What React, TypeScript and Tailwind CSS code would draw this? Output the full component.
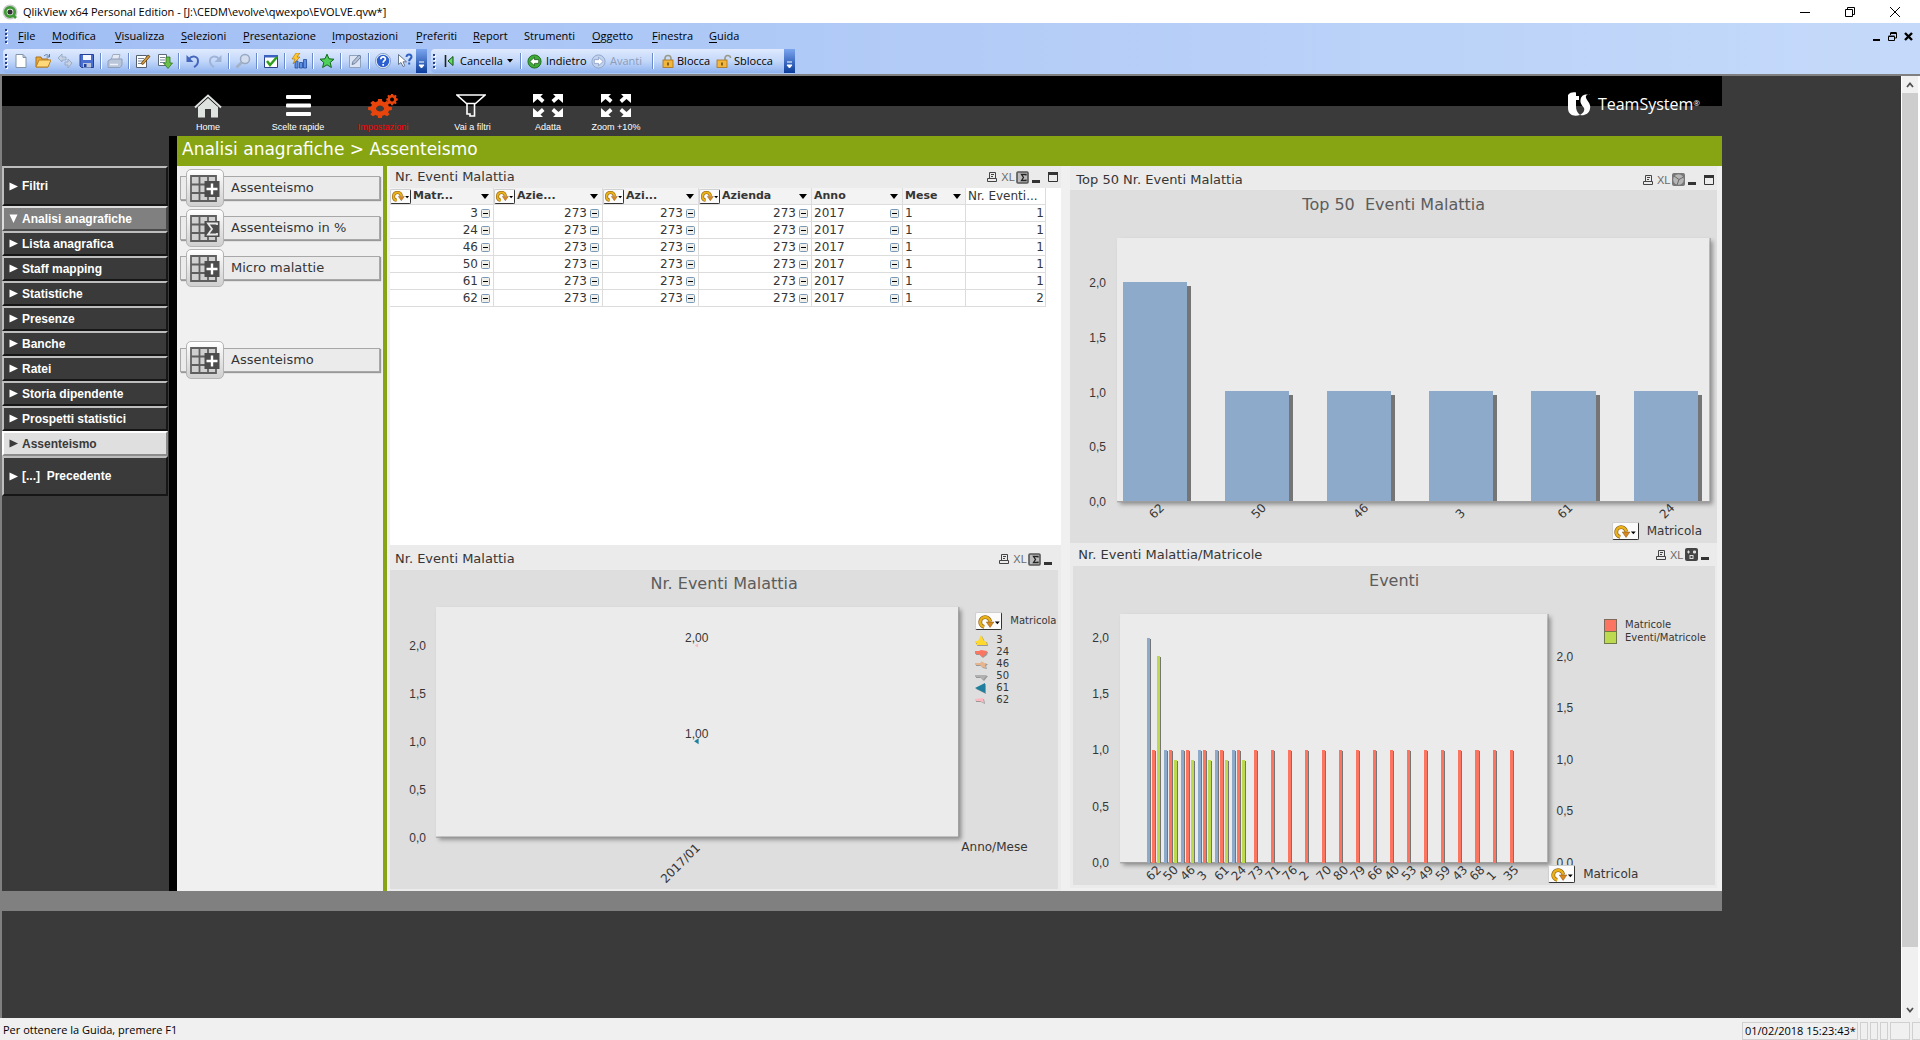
import React from 'react';

const TOOL = 'flex h-[22px] w-[22px] shrink-0 items-center justify-center';

// ---------- small glyphs ----------

function CycleButton({ small = false }: { small?: boolean }) {
  return (
    <button
      type="button"
      aria-label="Cambia dimensione"
      className={`flex shrink-0 items-center justify-center rounded-[2px] border border-t-[#d0d0d0] border-l-[#d0d0d0] border-r-[#333] border-b-[#333] bg-[#fbfbfb] ${
        small ? 'h-[15px] w-[21px]' : 'h-[18px] w-[27px]'
      }`}
    >
      <svg viewBox="0 0 22 14" className={small ? 'h-[12px] w-[19px]' : 'h-[15px] w-[24px]'}>
        <path d="M6.500 12A4.600 4.600 0 1 1 12 7" fill="none" stroke="#8a5a10" strokeWidth="3.600" />
        <path d="M6.500 12A4.600 4.600 0 1 1 12 7" fill="none" stroke="#e9b21c" strokeWidth="2.400" />
        <path d="M8.500 7.500h7L12 12.500z" fill="#d98a1c" stroke="#8a4f10" strokeWidth=".5" />
        <path d="M16.500 7h4.500l-2.200 2.600z" fill="#000" />
      </svg>
    </button>
  );
}

function Minus() {
  return (
    <svg viewBox="0 0 9 9" className="h-[9px] w-[9px] shrink-0">
      <rect x=".5" y=".5" width="8" height="8" rx="1" fill="#f1efe9" stroke="#7898b5" />
      <path d="M2 4.5h5" stroke="#000" />
    </svg>
  );
}

function Grip() {
  return (
    <svg viewBox="0 0 3 16" className="mr-[2px] ml-[2px] h-4 w-[3px] shrink-0">
      {[1, 5, 9, 13].map(y => (
        <g key={y}>
          <rect x="1" y={y + 1} width="2" height="2" fill="#fff" />
          <rect x="0" y={y} width="2" height="2" fill="#27418a" />
        </g>
      ))}
    </svg>
  );
}

function Sep() {
  return (
    <span className="flex w-[6px] shrink-0 justify-center">
      <span className="h-4 w-[2px] border-l border-[#6a8ccb] bg-white" />
    </span>
  );
}

function Cap() {
  return (
    <button
      type="button"
      aria-label="Opzioni barra"
      className="flex h-[24px] w-[11px] shrink-0 items-end justify-center bg-linear-to-b from-[#7ba5ee] to-[#0b3c9c] pb-1"
    >
      <svg viewBox="0 0 7 8" className="h-2 w-[7px]">
        <path d="M1 1h5M1 4h5L3.5 7z" stroke="#fff" fill="#fff" strokeWidth="1" />
      </svg>
    </button>
  );
}

// ---------- toolbar ----------

const toolIcons: Record<string, React.ReactNode> = {
  nuovo: <path d="M3 1.5h7l3 3v10H3zM10 1.5v3h3" fill="#fff" stroke="#8494a8" />,
  apri: (
    <>
      <path d="M1 14V4h5l1 2h6v8z" fill="#e9a83a" stroke="#a8701c" />
      <path d="M1 14l3-7h12l-3 7z" fill="#ffd979" stroke="#b9822a" />
      <path d="M9 3c2-2 4-1.500 5 .5M14.500 1v3h-3" fill="none" stroke="#55789f" />
    </>
  ),
  ricarica: (
    <path d="M1 5l4-4v3h4v3H5v2zM15 10l-4 5v-3H8V9h3V6z" fill="#c6d2e4" stroke="#8fa2bd" strokeWidth=".8" />
  ),
  salva: (
    <>
      <path d="M1 1.500h13.500v13H2.500L1 13z" fill="#4a6fd0" stroke="#24409a" />
      <path d="M4 2h8v5H4z" fill="#f4f7ff" />
      <path d="M4 10h8v4.500H4z" fill="#b8c4da" />
      <path d="M5 11h2.500v3H5z" fill="#24409a" />
    </>
  ),
  stampa: (
    <>
      <path d="M4 7l2-5.500h7L11.500 7z" fill="#e6ebf3" stroke="#9eabc0" />
      <path d="M1 8l3-2h11v6l-2 2.500H1z" fill="#b9c5d8" stroke="#8f9fb9" />
      <path d="M3 11.500h8" stroke="#eef2f8" strokeWidth="1.500" />
    </>
  ),
  modifica: (
    <>
      <path d="M1.500 2.500h10v12h-10z" fill="#fff" stroke="#55606e" />
      <path d="M3 5.500h6M3 8h5M3 10.500h6" stroke="#7a8694" />
      <path d="M6 10.500L13 2l2 1.500-7 8z" fill="#d69a3a" stroke="#5a3d10" strokeWidth=".8" />
    </>
  ),
  esegui: (
    <>
      <path d="M1.500 1.500h8v11h-8z" fill="#fff" stroke="#5d6a7a" />
      <path d="M3 4.500h5M3 7h5M3 9.500h5" stroke="#7a8694" />
      <path d="M9 4h4v6h2.500L11 15.500 6.500 10H9z" fill="#6cbf4a" stroke="#2f7a1c" strokeWidth=".8" />
    </>
  ),
  annulla: (
    <>
      <path d="M4 6c3-4 9-3 9 2 0 3-2 5-4 6" fill="none" stroke="#4566bd" strokeWidth="2" />
      <path d="M1.500 2v7h7z" fill="#4566bd" />
    </>
  ),
  ripristina: (
    <>
      <path d="M12 6C9 2 3 3 3 8c0 3 2 5 4 6" fill="none" stroke="#9fb3d6" strokeWidth="2" />
      <path d="M14.500 2v7h-7z" fill="#9fb3d6" />
    </>
  ),
  cerca: (
    <>
      <circle cx="10" cy="6" r="4.500" fill="#d3dded" stroke="#98a8c2" strokeWidth="1.500" />
      <path d="M6.500 9.500L1.500 14.500" stroke="#a4b0c4" strokeWidth="2.500" />
    </>
  ),
  selezioni: (
    <>
      <path d="M1.500 2.500h13v12h-13z" fill="#fff" stroke="#27418a" />
      <path d="M1 2h14v2.500H1z" fill="#3b62c0" />
      <path d="M4 8l3 4 7-8" fill="none" stroke="#2fa01c" strokeWidth="2.500" />
    </>
  ),
  grafico: (
    <>
      <path d="M4 8h3v7H4zM8.500 9.500h3V15h-3zM12.500 6.500h3V15h-3z" fill="#5f8fe0" stroke="#1f4aa0" strokeWidth=".8" />
      <path d="M5 0L1 6h3l-2 5 7-7H6l3-4z" fill="#ffc62e" stroke="#a87208" strokeWidth=".6" />
    </>
  ),
  preferito: (
    <path
      d="M8 1.200l2 4.600 5 .4-3.800 3.300 1.200 5L8 11.800l-4.400 2.700 1.200-5L1 6.200l5-.4z"
      fill="#4fd05a"
      stroke="#14671e"
    />
  ),
  note: (
    <>
      <path d="M2.500 2.500h11v12h-11z" fill="#dbe4f2" stroke="#8fa2bd" />
      <path d="M5 11.500l1-3L12 2l2 2-6 6.500z" fill="#b4c2d8" stroke="#71839f" />
    </>
  ),
  guida: (
    <>
      <circle cx="8" cy="8" r="7" fill="#2c5fd0" stroke="#e6edf9" strokeWidth="1.500" />
      <circle cx="8" cy="8" r="7.600" fill="none" stroke="#5877ae" strokeWidth=".6" />
      <path d="M5.800 6.200C6 3 10.800 3.400 10.300 6.300 10 7.800 8.200 7.800 8.200 9.800M8.200 11v1.800" fill="none" stroke="#fff" strokeWidth="1.700" />
    </>
  ),
  contesto: (
    <>
      <path d="M1.500 1.500v10l2.500-2 2 4 1.800-.8L6 8.800h3.500z" fill="#fff" stroke="#5a6a80" strokeWidth=".9" />
      <path d="M9.500 4C9.500.500 15 .8 14.500 4c-.3 1.800-2.300 2-2.300 4.200M12.200 9.500v2" fill="none" stroke="#2c5fc0" strokeWidth="2" />
    </>
  ),
};

const toolGroups = [
  ['nuovo', 'apri', 'ricarica', 'salva'],
  ['stampa'],
  ['modifica', 'esegui'],
  ['annulla', 'ripristina'],
  ['cerca'],
  ['selezioni'],
  ['grafico'],
  ['preferito'],
  ['note'],
  ['guida', 'contesto'],
];

const menus = [
  { label: 'File', w: 'w-[34px]' },
  { label: 'Modifica', w: 'w-[63px]' },
  { label: 'Visualizza', w: 'w-[66px]' },
  { label: 'Selezioni', w: 'w-[62px]' },
  { label: 'Presentazione', w: 'w-[89px]' },
  { label: 'Impostazioni', w: 'w-[84px]' },
  { label: 'Preferiti', w: 'w-[57px]' },
  { label: 'Report', w: 'w-[51px]' },
  { label: 'Strumenti', w: 'w-[68px]', plain: true },
  { label: 'Oggetto', w: 'w-[60px]' },
  { label: 'Finestra', w: 'w-[57px]' },
  { label: 'Guida', w: 'w-[50px]' },
];

function TitleBar() {
  return (
    <header className="flex h-[23px] items-center bg-white pl-[2px] text-black">
      <svg viewBox="0 0 16 16" className="mr-[5px] h-4 w-4">
        <circle cx="8" cy="8" r="7.500" fill="#c9cbc9" />
        <circle cx="8" cy="8" r="4.700" fill="#fff" stroke="#3f9a35" strokeWidth="2.800" />
        <circle cx="8" cy="8" r="2.600" fill="#333" />
        <path d="M11 11l3 3" stroke="#3f9a35" strokeWidth="2.600" />
      </svg>
      <h1 className="text-[11px] leading-4">QlikView x64 Personal Edition - [J:\CEDM\evolve\qwexpo\EVOLVE.qvw*]</h1>
      <div className="ml-auto flex items-center gap-[35px] pr-[20px]">
        <button type="button" aria-label="Riduci a icona">
          <svg viewBox="0 0 10 10" className="h-[10px] w-[10px]"><path d="M0 5.500h10" stroke="#000" /></svg>
        </button>
        <button type="button" aria-label="Ripristina">
          <svg viewBox="0 0 10 10" className="h-[10px] w-[10px]" fill="none" stroke="#000">
            <path d="M.5 2.500h7v7h-7zM2.500 2.500v-2h7v7h-2" />
          </svg>
        </button>
        <button type="button" aria-label="Chiudi">
          <svg viewBox="0 0 10 10" className="h-[10px] w-[10px]"><path d="M0 0l10 10M10 0L0 10" stroke="#000" /></svg>
        </button>
      </div>
    </header>
  );
}

function MenuBar() {
  return (
    <nav className="flex h-[26px] items-center pl-[3px]">
      <Grip />
      <div className="flex pl-2">
        {menus.map(m => (
          <button key={m.label} type="button" className={`${m.w} text-left text-[11px] leading-4 text-black`}>
            {m.plain ? m.label : <><u className="underline-offset-2">{m.label[0]}</u>{m.label.slice(1)}</>}
          </button>
        ))}
      </div>
      <div className="ml-auto flex items-center gap-[7px] pr-[7px]">
        <button type="button" aria-label="Riduci finestra">
          <svg viewBox="0 0 8 9" className="h-[9px] w-2"><path d="M0 8h7" stroke="#000" strokeWidth="2" /></svg>
        </button>
        <button type="button" aria-label="Ripristina finestra">
          <svg viewBox="0 0 9 9" className="h-[9px] w-[9px]" fill="none" stroke="#000">
            <path d="M.5 4.500h6v4h-6zM.5 4h6M2.500 3V1h6v5H7" /><path d="M2.500 1h6" strokeWidth="2" />
          </svg>
        </button>
        <button type="button" aria-label="Chiudi finestra">
          <svg viewBox="0 0 9 9" className="h-[9px] w-[9px]"><path d="M1 1l7 7M8 1L1 8" stroke="#000" strokeWidth="2.400" /></svg>
        </button>
      </div>
    </nav>
  );
}

function Lock({ open = false }: { open?: boolean }) {
  return (
    <svg viewBox="0 0 16 14" className="h-[14px] w-4 shrink-0">
      <path d={open ? 'M9 7V4.500C9 .500 14.500.500 14.500 4' : 'M5 7V4.500C5 .500 11 .500 11 4.500V7'} fill="none" stroke="#9a9a8a" strokeWidth="1.600" />
      <rect x={open ? 1 : 3} y="6" width="10" height="7.500" fill="#f2b63c" stroke="#a8701c" strokeWidth=".8" />
      <path d={open ? 'M6 8.500v3' : 'M8 8.500v3'} stroke="#5a3d10" strokeWidth="1.400" />
    </svg>
  );
}

function RoundArrow({ flip = false }: { flip?: boolean }) {
  return (
    <svg viewBox="0 0 16 16" className={`h-[15px] w-[15px] shrink-0 ${flip ? 'rotate-180' : ''}`}>
      <circle cx="8" cy="8" r="7" fill={flip ? '#c3d2ec' : '#3fae38'} stroke={flip ? '#8ea4cb' : '#1d6a1a'} />
      <path d="M3 8l5-4.500V6h4.500v4H8v2.500z" fill="#fff" stroke={flip ? '#7f97c4' : '#175214'} strokeWidth=".8" />
    </svg>
  );
}

function Toolbars() {
  const band = 'flex h-[24px] items-center rounded-l-sm bg-linear-to-b from-[#dfeafd] via-[#c3d8fa] to-[#8fb2ee]';
  return (
    <div className="flex h-[25px] gap-1 pl-[3px] text-[11px] leading-4 text-black">
      <div className={band}>
        <Grip />
        {toolGroups.map((group, i) => (
          <React.Fragment key={group[0]}>
            {i > 0 && <Sep />}
            {group.map(name => (
              <button key={name} type="button" aria-label={name} className={TOOL}>
                <svg viewBox="0 0 16 16" className="h-4 w-4">{toolIcons[name]}</svg>
              </button>
            ))}
          </React.Fragment>
        ))}
        <Cap />
      </div>
      <div className={band}>
        <Grip />
        <button type="button" className="flex w-[80px] items-center pl-[6px]">
          <svg viewBox="0 0 10 12" className="mr-[6px] h-3 w-[10px]">
            <path d="M1.500 0v12" stroke="#222" strokeWidth="1.600" />
            <path d="M9 1.500v9L4 6z" fill="#5ee05a" stroke="#184a16" />
          </svg>
          Cancella
          <svg viewBox="0 0 6 4" className="ml-1 h-1 w-[6px]"><path d="M0 0h6L3 3.500z" fill="#000" /></svg>
        </button>
        <Sep />
        <button type="button" className="flex w-[67px] items-center gap-1 pl-[3px]"><RoundArrow />Indietro</button>
        <button type="button" disabled className="flex w-[59px] items-center gap-1 text-[#8e9cb8]"><RoundArrow flip />Avanti</button>
        <Sep />
        <button type="button" className="flex w-[60px] items-center gap-px pl-1"><Lock />Blocca</button>
        <button type="button" className="flex w-[68px] items-center gap-[2px]"><Lock open />Sblocca</button>
        <Cap />
      </div>
    </div>
  );
}

// ---------- sheet header ----------

const arrows = (
  <svg viewBox="0 0 30 23" className="h-[23px] w-[30px]" fill="#fff">
    <path d="M0 0h10L7.500 2.500l4 3.500-2.500 3-4.500-4L0 9zM30 0H20l2.500 2.500-4 3.500 2.500 3 4.500-4L30 9zM0 23h10l-2.500-2.500 4-3.500L9 14l-4.500 4L0 14zM30 23H20l2.500-2.500-4-3.500 2.500-3 4.500 4 4.500-4z" />
  </svg>
);

function gearPath(cx: number, cy: number, r: number, teeth: number) {
  const pts: string[] = [];
  for (let i = 0; i < teeth; i++) {
    [[-0.32, 0.78], [-0.2, 1], [0.2, 1], [0.32, 0.78]].forEach(([off, k]) => {
      const a = ((i + off) / teeth) * Math.PI * 2;
      pts.push(`${(cx + Math.cos(a) * r * k).toFixed(2)} ${(cy + Math.sin(a) * r * k).toFixed(2)}`);
    });
  }
  return `M${pts.join('L')}Z`;
}

const actions = [
  {
    label: 'Home', w: 'w-[90px]',
    icon: (
      <svg viewBox="0 0 28 24" className="h-6 w-7">
        <path d="M4 13L14 4l10 9v10.500h-7V15h-6v8.500H4z" fill="#dfe3e0" />
        <path d="M1 13.500L14 1.500l13 12" fill="none" stroke="#dfe3e0" strokeWidth="2" />
      </svg>
    ),
  },
  {
    label: 'Scelte rapide', w: 'w-[90px]',
    icon: (
      <svg viewBox="0 0 25 21" className="h-[21px] w-[25px]" fill="#fff">
        <rect width="25" height="4" rx="1" /><rect y="8.500" width="25" height="4" rx="1" /><rect y="17" width="25" height="4" rx="1" />
      </svg>
    ),
  },
  {
    label: 'Impostazioni', w: 'w-[80px]', red: true,
    icon: (
      <svg viewBox="0 0 30 24" className="h-6 w-[30px]" fill="#e8450c" fillRule="evenodd">
        <path d={`${gearPath(12, 14.5, 12, 8)}M12 11a4 3.500 0 1 0 .1 0z`} transform="matrix(1 0 0 .8 0 3)" />
        <path d={`${gearPath(24, 5.5, 5.8, 8)}M24 3.500a2 2 0 1 0 .1 0z`} />
      </svg>
    ),
  },
  {
    label: 'Vai a filtri', w: 'w-[99px]',
    icon: (
      <svg viewBox="0 0 30 23" className="mr-1 h-[23px] w-[30px]" fill="none" stroke="#fff" strokeWidth="1.600">
        <path d="M1 1h28l-9.500 8.500h-9zM11 9.500V20h3v2h4.500V9.500" />
      </svg>
    ),
  },
  { label: 'Adatta', w: 'w-[52px]', icon: arrows },
  { label: 'Zoom +10%', w: 'w-[84px]', icon: arrows },
];

function SheetHeader() {
  return (
    <div className="flex h-[60px] bg-linear-to-b from-black from-50% to-[#3a3a3a] to-50% pl-[161px]">
      {actions.map(a => (
        <button key={a.label} type="button" className={`flex ${a.w} flex-col items-center justify-end pb-[3px]`}>
          <span className="flex h-[27px] items-center">{a.icon}</span>
          <span className={`text-[9px] leading-3 ${a.red ? 'text-[#f00]' : 'text-white'} mt-[2px] font-["Liberation_Sans",sans-serif]`}>
            {a.label}
          </span>
        </button>
      ))}
      <div className="ml-auto flex items-center gap-[7px] pr-[22px] pb-1 text-white">
        <svg viewBox="0 0 24 24" className="h-6 w-6" fill="#fff">
          <path d="M1 3C3 0 7 0 9 .5V4h3v4H9v6c0 4 1 6 4 9-6 2-12 0-12-7z" />
          <path d="M24 3c-5-1-6 1-4.500 4C22 11 24 13 23 17c-1 5-6 7-10 6 3-2 5-4 4-7-1-2-4-4-3.500-8C14 3 18 1.500 24 3z" />
        </svg>
        <span className="font-['Open_Sans',sans-serif] text-[16px] leading-6">TeamSystem<sup className="text-[8px]">®</sup></span>
      </div>
    </div>
  );
}

// ---------- left navigation ----------

const navItems = [
  'Analisi anagrafiche', 'Lista anagrafica', 'Staff mapping', 'Statistiche', 'Presenze', 'Banche', 'Ratei',
  'Storia dipendente', 'Prospetti statistici', 'Assenteismo',
];

function NavItem({ label, tone = 'dark', tall = false }: { label: string; tone?: 'dark' | 'open' | 'active'; tall?: boolean }) {
  const tones = {
    dark: 'bg-[#3a3a3a] text-white border-t-[#bdbdbd] border-l-[#bdbdbd] border-r-[#161616] border-b-[#161616]',
    open: 'bg-[#808080] text-white border-t-[#dcdcdc] border-l-[#dcdcdc] border-r-[#4a4a4a] border-b-[#4a4a4a]',
    active: 'bg-[#dfdfdf] text-[#3a3a3a] border-t-white border-l-white border-r-[#8c8c8c] border-b-[#8c8c8c]',
  };
  return (
    <li>
      <button type="button" className={`flex w-full items-center border-2 pl-[5px] text-left font-bold ${tall ? 'h-10' : 'h-[25px]'} ${tones[tone]}`}>
        <svg viewBox="0 0 9 9" className="mr-1 h-[9px] w-[9px]" fill="currentColor">
          <path d={tone === 'open' ? 'M.5.500h8L4.500 9z' : 'M.5.500L9 4.500.5 8.500z'} />
        </svg>
        <span className="whitespace-pre">{label}</span>
      </button>
    </li>
  );
}

function SideNav() {
  return (
    <nav className="w-[167px] shrink-0 bg-[#3a3a3a] pt-[30px] font-['Liberation_Sans',sans-serif] text-[12px] leading-4">
      <ul className="mr-px">
        <NavItem label="Filtri" tall />
        {navItems.map((label, i) => (
          <NavItem key={label} label={label} tone={i === 0 ? 'open' : i === navItems.length - 1 ? 'active' : 'dark'} />
        ))}
        <NavItem label="[...]  Precedente" tall />
      </ul>
    </nav>
  );
}

function ReportButton({ label, sum = false }: { label: string; sum?: boolean }) {
  return (
    <button type="button" className="flex h-10 w-full items-center text-left">
      <span className="flex h-6 w-full items-center border border-[#a8a8a8] bg-[#ebebeb] pl-[5px] shadow-[1px_1px_1px_#999]">
        <span className="flex h-[38px] w-[38px] shrink-0 items-center justify-center rounded-[5px] border border-[#b4b4b4] bg-linear-to-b from-white to-[#cfcfcf]">
          <svg viewBox="0 0 30 27" className="h-[27px] w-[30px]">
            <path d="M1 1h26v25H1z" fill="#d0d0d0" />
            <path d="M1 1h25v25H1zM1 9.500h25M1 18h25M9.500 1v25M18 1v25" fill="none" stroke="#5f5f5f" strokeWidth="1.800" />
            <path d="M14.500 6h15v16h-15z" fill="#4c4c4c" />
            {sum ? (
              <path d="M27 10v-1.500H18l4 5.500-4 5.500h9V18" fill="none" stroke="#e8e8e8" strokeWidth="1.800" />
            ) : (
              <path d="M22 8.500v11M16.500 14h11" stroke="#fff" strokeWidth="2.400" />
            )}
          </svg>
        </span>
        <span className="pl-[7px] text-[13px] leading-5 text-[#363636]">{label}</span>
      </span>
    </button>
  );
}

// ---------- widgets ----------

type Kind = 'sum' | 'pie' | 'grid';

function Caption({ title, kind, max = false, className }: { title: string; kind: Kind; max?: boolean; className: string }) {
  return (
    <div className={`flex items-center ${className}`}>
      <h2 className="text-[13px] leading-4 text-[#363636]">{title}</h2>
      <div className="ml-auto flex items-center">
        <button type="button" aria-label="Stampa" className="mr-1">
          <svg viewBox="0 0 10 10" className="h-[10px] w-[10px]" fill="none" stroke="#444">
            <path d="M2.500 6V.500h6V6M.500 6.500h9v3h-9zM4 2.500h3M4 4.500h2" />
          </svg>
        </button>
        <button type="button" className="mr-[2px] w-[13px] font-['Liberation_Sans',sans-serif] text-[11px] leading-3 text-[#6a6a6a]">XL</button>
        <button type="button" aria-label="Cambia tipo" className="mr-[3px]">
          <svg viewBox="0 0 13 13" className="h-[13px] w-[13px]">
            {kind === 'sum' && (
              <>
                <rect x="1" y="1" width="11" height="11" rx="1" fill="#bbb" stroke="#555" strokeWidth="1.600" />
                <path d="M10 4.500V3.500H5.500l2 3-2 3H10v-1" fill="none" stroke="#222" strokeWidth="1.300" />
              </>
            )}
            {kind === 'pie' && (
              <>
                <rect width="13" height="13" rx="2" fill="#777" />
                <circle cx="6.500" cy="6.500" r="5.300" fill="#b5b5b5" />
                <path d="M2 3l5 3.500L11.500 4M7 6.500L5 12" fill="none" stroke="#6a6a6a" />
              </>
            )}
            {kind === 'grid' && (
              <>
                <rect width="13" height="13" rx="2" fill="#444" />
                <path d="M2 4h3M3.500 2.500v3M8.500 3h2v2h-2z" stroke="#ddd" fill="#ddd" />
                <rect x="5" y="7.500" width="3" height="3" fill="none" stroke="#ddd" />
              </>
            )}
          </svg>
        </button>
        <button type="button" aria-label="Riduci" className="pt-2">
          <svg viewBox="0 0 8 3" className="h-[3px] w-2"><path d="M0 0h8v3H0z" fill="#333" /></svg>
        </button>
        {max && (
          <button type="button" aria-label="Ingrandisci" className="ml-2">
            <svg viewBox="0 0 10 10" className="h-[10px] w-[10px]"><path d="M.500 1.500h9v8h-9z" fill="none" stroke="#333" /><path d="M0 0h10v3H0z" fill="#333" /></svg>
          </button>
        )}
      </div>
    </div>
  );
}

const columns = [
  { label: 'Matr...', w: 'w-[104px]', cyc: true },
  { label: 'Azie...', w: 'w-[109px]', cyc: true },
  { label: 'Azi...', w: 'w-[96px]', cyc: true },
  { label: 'Azienda', w: 'w-[113px]', cyc: true },
  { label: 'Anno', w: 'w-[91px]' },
  { label: 'Mese', w: 'w-[63px]' },
];

const rows = [
  ['3', '273', '273', '273', '2017', '1', '1'],
  ['24', '273', '273', '273', '2017', '1', '1'],
  ['46', '273', '273', '273', '2017', '1', '1'],
  ['50', '273', '273', '273', '2017', '1', '1'],
  ['61', '273', '273', '273', '2017', '1', '1'],
  ['62', '273', '273', '273', '2017', '1', '2'],
];

function EventsTable() {
  return (
    <div className="h-[357px] bg-white">
      <table className="w-[656px] table-fixed border-separate border-spacing-0 text-[12px] leading-4 text-[#363636]">
        <thead>
          <tr className="h-[17px]">
            {columns.map(c => (
              <th key={c.label} className={`${c.w} border-r border-b border-[#dcdcdc] bg-[#f3f3f3] p-0`}>
                <div className="flex h-4 items-center">
                  {c.cyc && <CycleButton small />}
                  <span className="pl-[2px] text-[11px]">{c.label}</span>
                  <svg viewBox="0 0 8 5" className="mr-1 ml-auto h-[5px] w-2"><path d="M0 0h8L4 5z" fill="#000" /></svg>
                </div>
              </th>
            ))}
            <th className="w-[80px] border-r border-b border-[#dcdcdc] p-0 pl-[2px] text-left font-normal whitespace-nowrap">Nr. Eventi...</th>
          </tr>
        </thead>
        <tbody>
          {rows.map(row => (
            <tr key={row[0]} className="h-[17px]">
              {row.map((v, i) => (
                <td key={i} className="border-r border-b border-[#dcdcdc] p-0">
                  <div className={`flex h-4 items-center gap-[3px] ${i < 4 ? 'justify-end pr-[3px]' : i === 4 ? 'justify-between pr-[3px] pl-[2px]' : i === 5 ? 'pl-[2px]' : 'justify-end pr-[1px]'}`}>
                    {v}
                    {i < 5 && <Minus />}
                  </div>
                </td>
              ))}
            </tr>
          ))}
        </tbody>
      </table>
    </div>
  );
}

const AXIS = 'font-["Liberation_Sans",sans-serif] text-[12px]';
const ticks = ['0,0', '0,5', '1,0', '1,5', '2,0'];

function Plot({ x, y, w, h }: { x: number; y: number; w: number; h: number }) {
  return (
    <g>
      <rect x={x} y={y} width={w} height={h} fill="#ebebeb" className="[filter:drop-shadow(3px_3px_2px_#8c8c8c)]" />
      <path d={`M${x} ${y + h + 0.5}h${w}M${x + w + 0.5} ${y}v${h}`} stroke="#999" />
    </g>
  );
}

function YAxis({ x, base, step, right = false }: { x: number; base: number; step: number; right?: boolean }) {
  return (
    <g fill="#363636" className={AXIS}>
      {ticks.map((t, i) => (
        <text key={t} x={x} y={Math.round(base - i * step) + 5} textAnchor={right ? 'start' : 'end'}>{t}</text>
      ))}
    </g>
  );
}

function Slanted({ x, y, children }: { x: number; y: number; children: string }) {
  return (
    <text x={x} y={y} transform={`rotate(-45 ${x} ${y})`} fill="#363636" className="text-[12px]">
      {children}
    </text>
  );
}

function ChartTitle({ children }: { children: string }) {
  return <h3 className="text-center text-[16px] leading-5 whitespace-pre text-[#5c5c5c]">{children}</h3>;
}

const top50 = [
  { id: '62', value: 2 }, { id: '50', value: 1 }, { id: '46', value: 1 },
  { id: '3', value: 1 }, { id: '61', value: 1 }, { id: '24', value: 1 },
];

function Top50Chart() {
  return (
    <div className="h-[353px] bg-[#dedede] pt-[5px]">
      <ChartTitle>Top 50  Eventi Malattia</ChartTitle>
      <svg viewBox="0 0 646 307" className="block w-full overflow-visible">
        <Plot x={47} y={23} w={592} h={263} />
        <YAxis x={36} base={286} step={54.7} />
        {top50.map((b, i) => {
          const h = b.value === 2 ? 219 : 110;
          return (
            <g key={b.id} shapeRendering="crispEdges">
              <rect x={57 + i * 102} y={290 - h} width="64" height={h - 4} fill="#757575" />
              <rect x={53 + i * 102} y={286 - h} width="64" height={h} fill="#8eaacb" />
              <Slanted x={84 + i * 102} y={304}>{b.id}</Slanted>
            </g>
          );
        })}
      </svg>
      <div className="flex items-center justify-end gap-2 pr-[15px]">
        <CycleButton />
        <span className="text-[12px] leading-4 text-[#363636]">Matricola</span>
      </div>
    </div>
  );
}

const series = [
  { id: '3', color: '#ffd92e', d: 'M0 6h3l3-6 3 6h2l1 4H1l1-2H0z' },
  { id: '24', color: '#fb7561', d: 'M0 4h4l2-1 6 1-1 3-4 3-3-3H0z' },
  { id: '46', color: '#e6b58e', d: 'M0 4h5l2-2 1 2h4l-2 2 1 3-4-1-2-2H0z' },
  { id: '50', color: '#b0b0b0', d: 'M0 4h12L8 9 5 6H0z' },
  { id: '61', color: '#1f7f9c', d: 'M0 5l10-5v10z' },
  { id: '62', color: '#fdb9c1', d: 'M0 4l8-1 1 5-4-2H0z' },
];

function TrendChart() {
  return (
    <div className="mr-[3px] h-[319px] bg-[#dedede] pt-1">
      <ChartTitle>Nr. Eventi Malattia</ChartTitle>
      <div className="flex">
        <svg viewBox="0 0 572 294" className="block min-w-0 flex-1 overflow-visible">
          <Plot x={46} y={13} w={523} h={230} />
          <YAxis x={36} base={243} step={48} />
          <g fill="#363636" textAnchor="middle" className={AXIS}>
            <text x="307" y="48">2,00</text>
            <text x="307" y="144">1,00</text>
          </g>
          <path d="M305 51.500l3.500-2v4z" fill="#fdb9c1" />
          <path d="M304.500 147.500l4.500-3v6z" fill="#1f7f9c" />
          <Slanted x={276} y={290}>2017/01</Slanted>
        </svg>
        <aside className="flex w-[97px] flex-col text-[10px] leading-3 text-[#363636]">
          <div className="mt-[18px] ml-[14px] flex items-center gap-2">
            <CycleButton />
            <span>Matricola</span>
          </div>
          <ul className="mt-1 ml-[14px]">
            {series.map(s => (
              <li key={s.id} className="flex items-center gap-2">
                <svg viewBox="0 0 13 11" className="h-[11px] w-[13px]">
                  <path d={s.d} transform="translate(1 1)" fill="#999" />
                  <path d={s.d} fill={s.color} />
                </svg>
                {s.id}
              </li>
            ))}
          </ul>
          <span className="mt-auto mb-[33px] text-[12px] leading-4">Anno/Mese</span>
        </aside>
      </div>
    </div>
  );
}

const matricole = [
  '62', '50', '46', '3', '61', '24', '73', '71', '76', '2', '70',
  '80', '79', '66', '40', '53', '49', '59', '43', '68', '1', '35',
];

function ComboBar({ x, h, color }: { x: number; h: number; color: string }) {
  return (
    <g shapeRendering="crispEdges">
      <rect x={x + 1} y={273 - h} width="3" height={h - 1} fill="#757575" />
      <rect x={x} y={272 - h} width="3" height={h} fill={color} />
    </g>
  );
}

function ComboChart() {
  return (
    <div className="relative mr-[2px] ml-[3px] h-[319px] bg-[#dedede] pt-[5px]">
      <ChartTitle>Eventi</ChartTitle>
      <div className="flex">
        <svg viewBox="0 0 526 294" className="block min-w-0 flex-1 overflow-visible">
          <Plot x={47} y={23} w={427} h={248} />
          <YAxis x={36} base={271} step={56.3} />
          <YAxis x={483} base={271} step={51.6} right />
          {matricole.map((id, i) => (
            <g key={id}>
              {i < 6 && <ComboBar x={74 + i * 17} h={i === 0 ? 225 : 113} color="#8eaacb" />}
              <ComboBar x={79 + i * 17} h={113} color="#fb7561" />
              {i < 6 && <ComboBar x={84 + i * 17} h={i === 0 ? 207 : 103} color="#bcd94f" />}
              <Slanted x={78 + i * 17} y={290}>{id}</Slanted>
            </g>
          ))}
        </svg>
        <ul className="w-[115px] pt-[28px] pl-1 text-[10px] leading-3 text-[#363636]">
          <li className="flex items-center gap-2"><i className="h-3 w-[13px] border border-b-0 border-[#7d6a5a] bg-[#fb7561]" />Matricole</li>
          <li className="flex items-center gap-2"><i className="h-[13px] w-[13px] border border-[#6f7a4a] bg-[#bcd94f]" />Eventi/Matricole</li>
        </ul>
      </div>
      <div className="absolute bottom-[2px] left-[74%] flex items-center gap-2">
        <CycleButton />
        <span className="text-[12px] leading-4 text-[#363636]">Matricola</span>
      </div>
    </div>
  );
}

// ---------- page ----------

function Sheet() {
  return (
    <main className="min-w-0 flex-1">
      <SheetHeader />
      <div className="flex items-stretch">
        <SideNav />
        <div className="w-2 shrink-0 bg-black" />
        <div className="min-w-0 flex-1 bg-[#f0f0f0]">
          <h2 className="h-[30px] bg-[#87a512] pl-[5px] text-[17px] leading-[27px] text-white">
            Analisi anagrafiche &gt; Assenteismo
          </h2>
          <div className="flex">
            <div className="w-[206px] shrink-0 pt-[2px] pr-[3px] pl-[3px]">
              <ReportButton label="Assenteismo" />
              <ReportButton label="Assenteismo in %" sum />
              <ReportButton label="Micro malattie" />
              <div className="mt-[52px]"><ReportButton label="Assenteismo" /></div>
            </div>
            <div className="w-1 shrink-0 bg-[#87a512]" />
            <div className="min-w-0 flex-[680_1_0px] pr-[5px] pl-[3px]">
              <section className="bg-[#ebebeb]">
                <Caption title="Nr. Eventi Malattia" kind="sum" max className="h-[22px] pr-[3px] pl-[5px]" />
                <EventsTable />
              </section>
              <section className="bg-[#ebebeb] pb-[2px]">
                <Caption title="Nr. Eventi Malattia" kind="sum" className="h-[25px] pt-[3px] pr-[9px] pl-[5px]" />
                <TrendChart />
              </section>
            </div>
            <div className="min-w-0 flex-[655_1_0px] pr-[5px] pl-1">
              <section className="bg-[#ebebeb]">
                <Caption title="Top 50 Nr. Eventi Malattia" kind="pie" max className="h-[24px] pt-[3px] pr-[3px] pl-[6px]" />
                <Top50Chart />
              </section>
              <section className="bg-[#ebebeb] pb-[3px]">
                <Caption title="Nr. Eventi Malattia/Matricole" kind="grid" className="h-[23px] pr-2 pl-2" />
                <ComboChart />
              </section>
            </div>
          </div>
        </div>
      </div>
      <div className="h-5 bg-[#808080]" />
    </main>
  );
}

export default function App() {
  return (
    <div className="flex min-h-screen flex-col bg-[#3a3a3a] font-['DejaVu_Sans',Verdana,sans-serif]">
      <div className="font-['Open_Sans','Noto_Sans',sans-serif]">
        <TitleBar />
        <div className="border-b-2 border-[#808080] bg-linear-to-r from-[#a1bef4] to-[#c5dafa]">
          <MenuBar />
          <Toolbars />
        </div>
      </div>
      <div className="flex flex-1 border-l-2 border-[#808080]">
        <Sheet />
        <div className="w-[179px] shrink-0" />
        <div className="flex w-[19px] shrink-0 flex-col items-center border-r-2 border-l border-r-[#fdfdfd] border-l-white bg-[#f0f0f0]">
          <button type="button" aria-label="Scorri su" className="flex h-[17px] w-full items-center justify-center">
            <svg viewBox="0 0 8 6" className="h-[6px] w-2"><path d="M1 5l3-3.500L7 5" fill="none" stroke="#505050" strokeWidth="1.800" /></svg>
          </button>
          <div className="w-full flex-[854_1_0px] bg-[#cdcdcd]" />
          <div className="flex-[54_1_0px]" />
          <button type="button" aria-label="Scorri giù" className="flex h-[17px] w-full items-center justify-center">
            <svg viewBox="0 0 8 6" className="h-[6px] w-2"><path d="M1 1l3 3.500L7 1" fill="none" stroke="#505050" strokeWidth="1.800" /></svg>
          </button>
        </div>
      </div>
      <footer className="flex h-[22px] items-end bg-[#f0f0f0] pl-[3px] font-['Open_Sans','Noto_Sans',sans-serif] text-[11px] leading-5 text-black">
        <span>Per ottenere la Guida, premere F1</span>
        <div className="ml-auto flex h-[18px] gap-[2px]">
          <span className="w-[116px] border border-[#d0d0d0] pl-[2px] leading-4">01/02/2018 15:23:43*</span>
          <span className="w-2 border border-[#d0d0d0]" />
          <span className="w-2 border border-[#d0d0d0]" />
          <span className="w-2 border border-[#d0d0d0]" />
          <span className="w-5 border border-[#d0d0d0]" />
          <span className="w-2 border border-r-0 border-[#d0d0d0]" />
        </div>
      </footer>
    </div>
  );
}
